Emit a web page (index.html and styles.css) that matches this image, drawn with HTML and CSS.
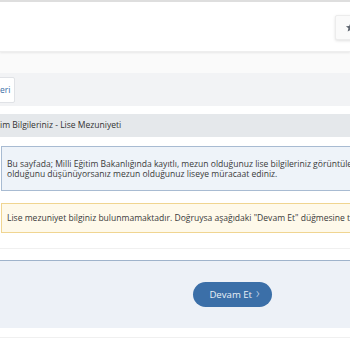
FILE: index.html
```html
<!DOCTYPE html>
<html>
<head>
<meta charset="utf-8">
<link rel="stylesheet" href="styles.css">
</head>
<body>
<div class="page">
  <header class="topbar">
    <button class="star-btn" aria-label="Favori">
      <svg width="11" height="11" viewBox="0 0 24 24"><path d="M12 2l2.9 6.6 7.1.6-5.4 4.7 1.6 7-6.2-3.7-6.2 3.7 1.6-7L2 9.2l7.1-.6z" fill="#5f6670"/></svg>
    </button>
  </header>
  <div class="subbar"></div>
  <div class="toolbar">
    <button class="back-btn">eri</button>
  </div>
  <div class="section-title">im Bilgileriniz - Lise Mezuniyeti</div>
  <div class="alert info"><p class="lines">Bu sayfada; Milli Eğitim Bakanlığında kayıtlı, mezun olduğunuz lise bilgileriniz görüntülenmektedir. Hatalı<br>olduğunu düşünüyorsanız mezun olduğunuz liseye müracaat ediniz.</p></div>
  <div class="alert warn">Lise mezuniyet bilginiz bulunmamaktadır. Doğruysa aşağıdaki "Devam Et" düğmesine tıklayınız.</div>
  <div class="divider"></div>
  <div class="footer">
    <button class="next-btn">Devam Et <span class="chev">&#x203A;</span></button>
  </div>
  <div class="bottom-line"></div>
</div>
</body>
</html>
```
FILE: styles.css
```css
html, body {
  margin: 0;
  padding: 0;
  background: #fff;
}
.page {
  width: 350px;
  height: 350px;
  overflow: hidden;
  font-family: "Open Sans", "Noto Sans", sans-serif;
  font-size: 8.55px;
  color: #3a3a3a;
}
.topbar {
  height: 49px;
  border-top: 2px solid #dedede;
  background: #fff;
  box-shadow: 0 1px 2px rgba(0,0,0,0.08);
  border-bottom: 1px solid #eeeeee;
  display: flex;
  align-items: center;
  justify-content: flex-end;
  position: relative;
}
.star-btn {
  width: 28px;
  height: 25px;
  margin-right: -13px;
  margin-top: 2px;
  border: 1px solid #ececec;
  border-radius: 2px;
  background: #fafafa;
  box-shadow: 0 1px 3px rgba(0,0,0,0.12);
  padding: 0 0 0 9px;
  display: flex;
  align-items: center;
}
.subbar {
  height: 21px;
  background: #fafafa;
}
.toolbar {
  height: 33px;
  background: #f2f3f5;
  display: flex;
  align-items: center;
}
.back-btn {
  height: 26px;
  margin-left: -8px;
  padding: 0 4px 0 7px;
  border: 1px solid #e0e2e6;
  border-radius: 2px;
  background: #fff;
  font-family: inherit;
  font-size: 8.5px;
  color: #3a6ea5;
}
.section-title {
  margin-top: 8px;
  height: 23px;
  line-height: 23px;
  background: #e5e8eb;
  padding-left: 0;
  color: #333;
}
.alert {
  margin-left: 1px;
  margin-right: -300px;
  line-height: 10px;
}
.lines {
  margin: 0;
}
.info {
  margin-top: 9px;
  height: 43px;
  box-sizing: content-box;
  border: 1px solid #a8bbd2;
  background: #eef3f9;
  padding: 0 0 0 5px;
  display: flex;
  align-items: center;
  white-space: nowrap;
}
.warn {
  margin-top: 12px;
  height: 28px;
  border: 1px solid #f0d591;
  background: #fef9ea;
  padding: 0 0 0 5px;
  display: flex;
  align-items: center;
  white-space: nowrap;
}
.divider {
  margin-top: 15px;
  height: 1px;
  background: #f0f0f0;
}
.footer {
  margin-top: 11px;
  height: 67px;
  border-top: 1px solid #9fb3cb;
  background: #edf1f7;
  display: flex;
  align-items: center;
}
.next-btn {
  margin-left: 193px;
  width: 79px;
  height: 25px;
  border: none;
  border-radius: 13px;
  background: #3b6fa8;
  color: #e9eff6;
  font-family: inherit;
  font-size: 9.6px;
  padding: 0 0 1px 4px;
  display: flex;
  align-items: center;
  justify-content: center;
}
.chev {
  font-size: 14px;
  margin-left: 4px;
  color: #c9d7e8;
  font-weight: 300;
  line-height: 1;
  margin-top: -2px;
}
.bottom-line {
  margin-top: 9px;
  height: 1px;
  background: #f0f0f0;
}
```
